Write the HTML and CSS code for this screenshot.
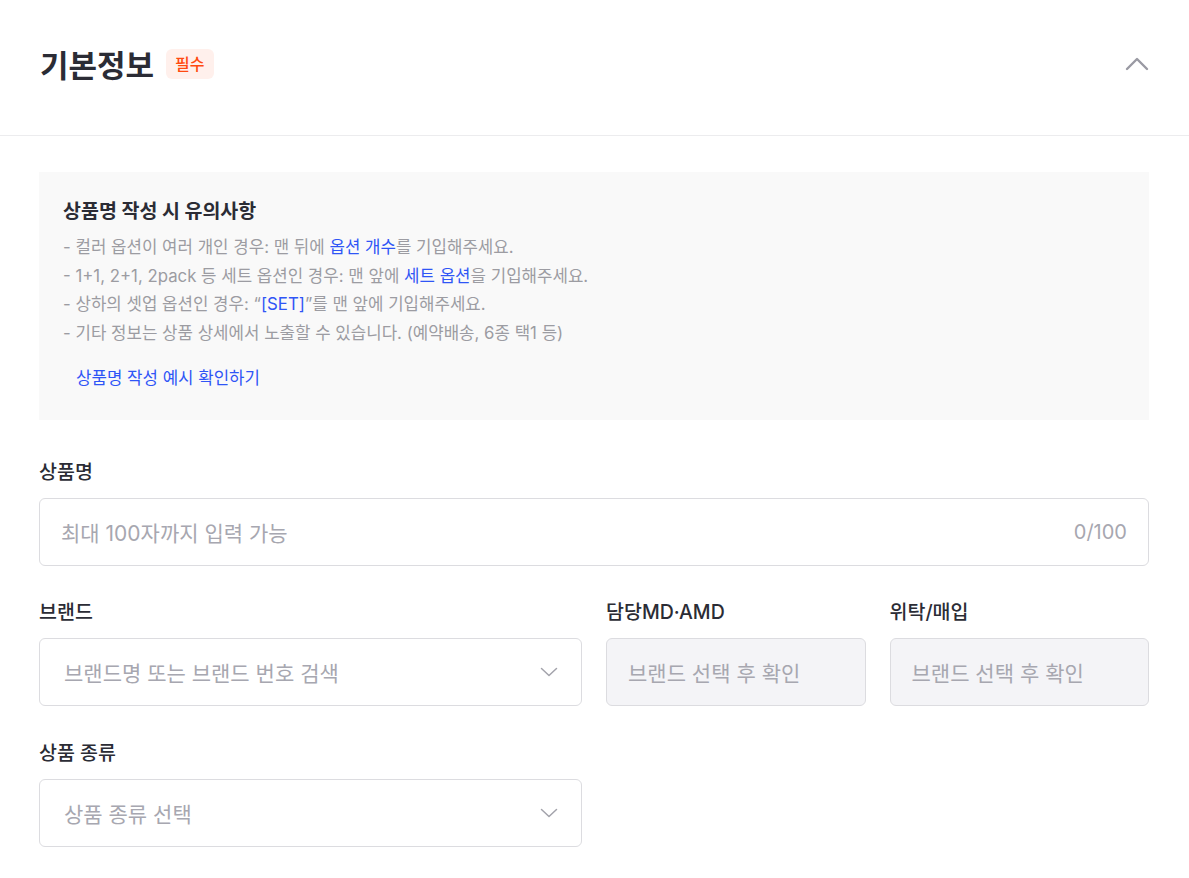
FILE: index.html
```html
<!DOCTYPE html>
<html lang="ko">
<head>
    <meta charset="utf-8">
    <title>기본정보</title>
    <meta name="viewport" content="width=device-width, initial-scale=1">
    <link rel="stylesheet" href="styles.css">
</head>
<body>
    <section class="panel">
        <header class="panel-head">
            <h2 class="panel-title">기본정보 <span class="badge">필수</span></h2>
            <button class="fold" type="button" aria-label="접기">
                <svg width="24" height="16" viewBox="0 0 24 16"><path d="M2 13 L12 3 L22 13" fill="none" stroke="#9a9aa3" stroke-width="2.4" stroke-linecap="round" stroke-linejoin="round"/></svg>
            </button>
        </header>

        <div class="panel-body">
            <div class="notice">
                <h3 class="notice-title">상품명 작성 시 유의사항</h3>
                <ul class="notice-list">
                    <li>- 컬러 옵션이 여러 개인 경우: 맨 뒤에 <em>옵션 개수</em>를 기입해주세요.</li>
                    <li>- 1+1, 2+1, 2pack 등 세트 옵션인 경우: 맨 앞에 <em>세트 옵션</em>을 기입해주세요.</li>
                    <li>- 상하의 셋업 옵션인 경우: “<em>[SET]</em>”를 맨 앞에 기입해주세요.</li>
                    <li>- 기타 정보는 상품 상세에서 노출할 수 있습니다. (예약배송, 6종 택1 등)</li>
                </ul>
                <a class="notice-link" href="#">상품명 작성 예시 확인하기</a>
            </div>

            <div class="field">
                <label class="label">상품명</label>
                <div class="input">
                    <span class="placeholder">최대 100자까지 입력 가능</span>
                    <span class="counter">0/100</span>
                </div>
            </div>

            <div class="row">
                <div class="field">
                    <label class="label">브랜드</label>
                    <div class="input select">
                        <span class="placeholder">브랜드명 또는 브랜드 번호 검색</span>
                        <svg class="caret" width="18" height="10" viewBox="0 0 18 10"><path d="M1.5 1.5 L9 8.5 L16.5 1.5" fill="none" stroke="#a3a3ab" stroke-width="1.5" stroke-linecap="round" stroke-linejoin="round"/></svg>
                    </div>
                </div>
                <div class="row-half">
                    <div class="field">
                        <label class="label">담당MD·AMD</label>
                        <div class="input disabled">
                            <span class="placeholder">브랜드 선택 후 확인</span>
                        </div>
                    </div>
                    <div class="field">
                        <label class="label">위탁/매입</label>
                        <div class="input disabled">
                            <span class="placeholder">브랜드 선택 후 확인</span>
                        </div>
                    </div>
                </div>
            </div>

            <div class="row row-last">
                <div class="field">
                    <label class="label">상품 종류</label>
                    <div class="input select">
                        <span class="placeholder">상품 종류 선택</span>
                        <svg class="caret" width="18" height="10" viewBox="0 0 18 10"><path d="M1.5 1.5 L9 8.5 L16.5 1.5" fill="none" stroke="#a3a3ab" stroke-width="1.5" stroke-linecap="round" stroke-linejoin="round"/></svg>
                    </div>
                </div>
            </div>
        </div>
    </section>
</body>
</html>
```

FILE: styles.css
```css
* {
    box-sizing: border-box;
}

body {
    margin: 0;
    background: #fff;
    color: #2b2c35;
    font-family: Inter, "Noto Sans CJK KR", sans-serif;
}

.panel-head {
    height: 136px;
    padding: 0 40px;
    display: flex;
    align-items: center;
    justify-content: space-between;
    border-bottom: 1px solid #ececee;
}

.panel-title {
    margin: 0;
    font-size: 31px;
    font-weight: 700;
    display: flex;
    align-items: center;
    gap: 12px;
    padding-bottom: 8px;
}

.badge {
    font-size: 16px;
    font-weight: 500;
    color: #ff4a10;
    background: #fff0ec;
    border-radius: 6px;
    padding: 2px 9px;
    line-height: 26px;
}

.fold {
    border: 0;
    background: none;
    padding: 0;
    margin-bottom: 8px;
    display: flex;
}

.panel-body {
    padding: 36px 40px 30px 39px;
}

.notice {
    background: #f9f9f9;
    padding: 26px 24px 28px 24px;
}

.notice-title {
    margin: 0 0 9px;
    font-size: 19.5px;
    font-weight: 700;
    line-height: 26px;
}

.notice-list {
    list-style: none;
    margin: 0;
    padding: 0;
    font-size: 16.8px;
    line-height: 28.5px;
    color: #9c9ca2;
}

.notice-list em {
    font-style: normal;
    color: #2f55f6;
}

.notice-link {
    display: inline-block;
    margin-top: 17px;
    margin-left: 13px;
    font-size: 16.8px;
    line-height: 28px;
    color: #2f55f6;
    text-decoration: none;
}

.field {
    margin-top: 40px;
}

.row {
    display: grid;
    grid-template-columns: 1fr 1fr;
    gap: 24px;
}

.row-half {
    display: grid;
    grid-template-columns: 1fr 1fr;
    gap: 24px;
}

.row .field {
    margin-top: 34px;
}

.row-last .field {
    margin-top: 35px;
}

.label {
    display: block;
    font-size: 19.5px;
    font-weight: 500;
    line-height: 24px;
    margin-bottom: 14px;
}

.input {
    height: 68px;
    border: 1px solid #dcdce0;
    border-radius: 6px;
    padding: 0 21px;
    display: flex;
    align-items: center;
    justify-content: space-between;
    background: #fff;
}

.placeholder {
    font-size: 21px;
    color: #a7a7b0;
}

.counter {
    font-size: 20px;
    color: #a7a7b0;
}

.select {
    padding-left: 24px;
    padding-right: 23px;
}

.disabled {
    background: #f4f4f7;
}
```
